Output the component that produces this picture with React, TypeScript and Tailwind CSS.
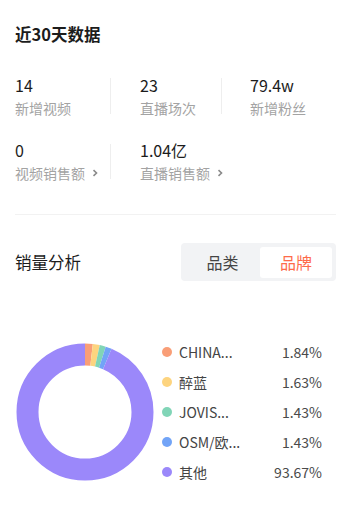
import React from "react";

const FONT = '"Noto Sans CJK SC", "Noto Sans", sans-serif';

const slices = [
  { name: "CHINA...", value: 1.84, color: "#f99e77" },
  { name: "醉蓝", value: 1.63, color: "#fdd47f" },
  { name: "JOVIS...", value: 1.43, color: "#81d5b7" },
  { name: "OSM/欧...", value: 1.43, color: "#72a4f7" },
  { name: "其他", value: 93.67, color: "#9b88fa" },
];

function Chevron() {
  return (
    <svg width="6" height="8" viewBox="0 0 6 8" className="ml-[7px]">
      <path d="M1.5 1.2 L4.5 4 L1.5 6.8" stroke="#8a8a8a" strokeWidth="1.6" fill="none" />
    </svg>
  );
}

function Stat({ value, label, arrow }: { value: string; label: string; arrow?: boolean }) {
  return (
    <div className="flex flex-col">
      <div className="text-[16px] leading-[22px] text-[#1c1c1c]">{value}</div>
      <div className="mt-[2px] flex items-center text-[14px] leading-[20px] text-[#a3a3a3]">
        {label}
        {arrow && <Chevron />}
      </div>
    </div>
  );
}

function Donut() {
  const r = 57.5;
  const c = 2 * Math.PI * r;
  let acc = 0;
  return (
    <svg width="138" height="138" viewBox="0 0 138 138">
      <g transform="rotate(-90 69 69)">
        {slices.map((s) => {
          const len = (s.value / 100) * c;
          const el = (
            <circle
              key={s.name}
              cx="69"
              cy="69"
              r={r}
              fill="none"
              stroke={s.color}
              strokeWidth="22"
              strokeDasharray={`${len} ${c - len}`}
              strokeDashoffset={-acc}
            />
          );
          acc += len;
          return el;
        })}
      </g>
    </svg>
  );
}

export default function App() {
  return (
    <div className="h-[526px] w-[353px] bg-white pl-[15px] pr-[17px]" style={{ fontFamily: FONT }}>
      <h1 className="pt-[22px] text-[16.5px] font-bold leading-[24px] text-[#1c1c1c]">近30天数据</h1>

      <div className="mt-[28px] flex items-center">
        <div className="w-[95px]">
          <Stat value="14" label="新增视频" />
        </div>
        <div className="h-[36px] w-px bg-[#eeeeee]" />
        <div className="w-[110px] pl-[29px]">
          <Stat value="23" label="直播场次" />
        </div>
        <div className="h-[36px] w-px bg-[#eeeeee]" />
        <div className="pl-[28px]">
          <Stat value="79.4w" label="新增粉丝" />
        </div>
      </div>

      <div className="mt-[21px] flex items-center">
        <div className="w-[95px]">
          <Stat value="0" label="视频销售额" arrow />
        </div>
        <div className="h-[35px] w-px bg-[#eeeeee]" />
        <div className="pl-[29px]">
          <Stat value="1.04亿" label="直播销售额" arrow />
        </div>
      </div>

      <div className="mt-[31px] h-px bg-[#f2f2f2]" />

      <div className="mt-[28px] flex items-center justify-between">
        <div className="text-[16.5px] leading-[24px] text-[#1c1c1c]">销量分析</div>
        <div className="flex h-[38px] w-[155px] items-center rounded-[4px] bg-[#f2f3f5] px-[4px]">
          <div className="flex-1 text-center text-[16px] text-[#444444]">品类</div>
          <div className="flex h-[31px] w-[72px] items-center justify-center rounded-[3px] bg-white text-[16px] text-[#fe6b4a]">
            品牌
          </div>
        </div>
      </div>

      <div className="mt-[56px] flex items-center">
        <div className="ml-[1px]">
          <Donut />
        </div>
        <div className="ml-[8px] flex w-[160px] flex-col">
          {slices.map((s) => (
            <div key={s.name} className="flex h-[30px] items-center text-[14px] text-[#444444]">
              <span className="h-[10px] w-[10px] rounded-full" style={{ backgroundColor: s.color }} />
              <span className="ml-[7px] flex-1">{s.name}</span>
              <span className="text-[#4a4a4a]">{s.value.toFixed(2)}%</span>
            </div>
          ))}
        </div>
      </div>
    </div>
  );
}
